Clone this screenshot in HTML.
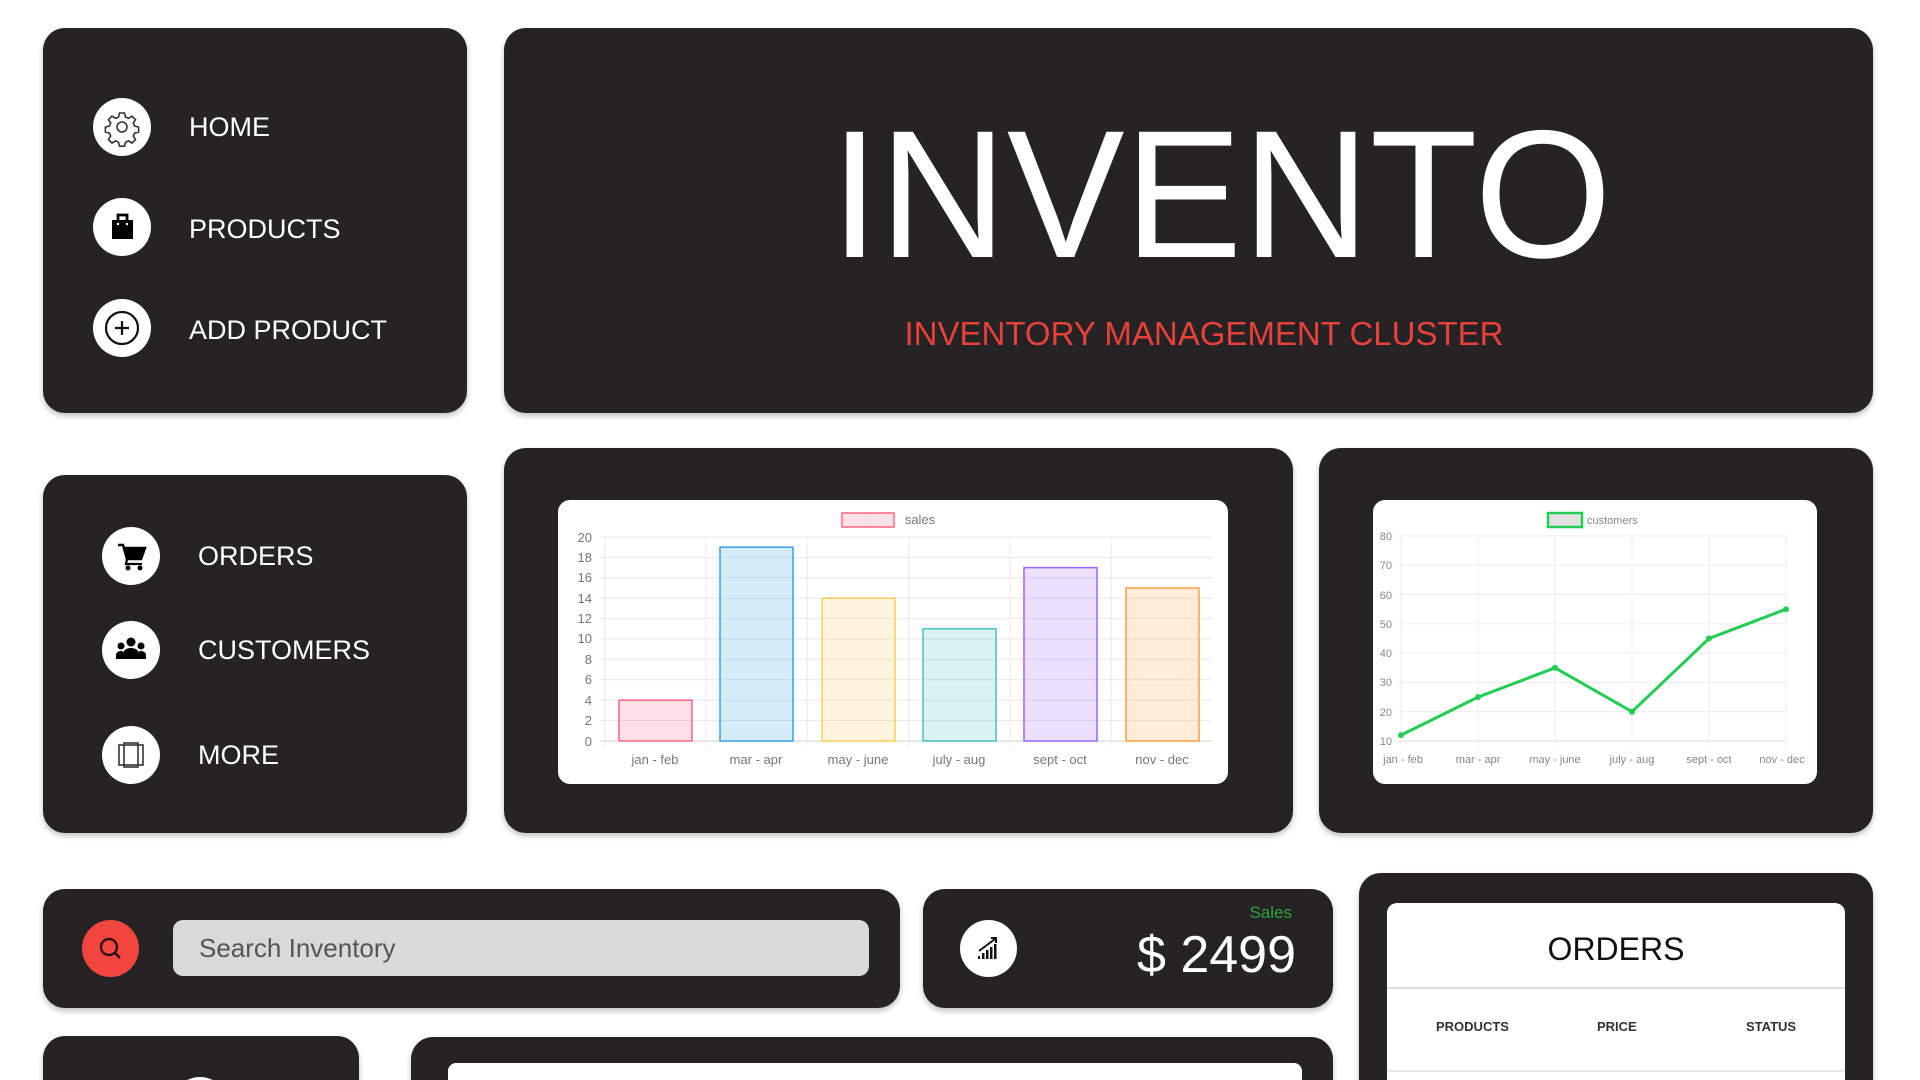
<!DOCTYPE html>
<html><head><meta charset="utf-8"><style>
*{margin:0;padding:0;box-sizing:border-box}
html,body{width:1920px;height:1080px;overflow:hidden}
body{background:#fff;position:relative;font-family:"Liberation Sans",sans-serif}
.c{position:absolute;background:#252324;border-radius:22px;box-shadow:0 3px 6px rgba(0,0,0,.25)}
.a{position:absolute}
.ic{position:absolute;width:58px;height:58px;border-radius:50%;background:#fff}
.nav{position:absolute;color:#fff;font-size:27px;line-height:1}
.w{position:absolute;background:#fff;border-radius:12px}
</style></head><body>

<!-- nav panel 1 -->
<div class="c" style="left:43px;top:28px;width:424px;height:385px"></div>
<div class="ic" style="left:93px;top:98px"><svg width="58" height="58" viewBox="0 0 58 58"><g fill="none" stroke="#333" stroke-width="1.6"><path d="M26.5 15h5l1 4 3 1.3 3.5-2.2 3.5 3.5-2.2 3.5 1.3 3 4 1v5l-4 1-1.3 3 2.2 3.5-3.5 3.5-3.5-2.2-3 1.3-1 4h-5l-1-4-3-1.3-3.5 2.2-3.5-3.5 2.2-3.5-1.3-3-4-1v-5l4-1 1.3-3-2.2-3.5 3.5-3.5 3.5 2.2 3-1.3z"/><circle cx="29" cy="29" r="5"/></g></svg></div>
<div class="nav" style="left:189px;top:114px">HOME</div>
<div class="ic" style="left:93px;top:198px"><svg width="58" height="58" viewBox="0 0 58 58"><path d="M19 22h21v19H19z" fill="#000"/><path d="M25 22v-5h9v5" fill="none" stroke="#000" stroke-width="2.8"/><circle cx="25" cy="26" r="1.2" fill="#fff"/><circle cx="34" cy="26" r="1.2" fill="#fff"/></svg></div>
<div class="nav" style="left:189px;top:216px">PRODUCTS</div>
<div class="ic" style="left:93px;top:299px"><svg width="58" height="58" viewBox="0 0 58 58"><circle cx="29" cy="29" r="16" fill="none" stroke="#111" stroke-width="2.2"/><path d="M29 22v14M22 29h14" stroke="#111" stroke-width="2.2"/></svg></div>
<div class="nav" style="left:189px;top:317px">ADD PRODUCT</div>

<!-- header -->
<div class="c" style="left:504px;top:28px;width:1369px;height:385px"></div>
<div class="a" style="left:504px;width:1434px;top:102px;text-align:center;color:#fff;font-size:182px;line-height:184px;transform:scaleX(.97)">INVENTO</div>
<div class="a" style="left:504px;width:1400px;top:314px;text-align:center;color:#e8403a;font-size:33px;line-height:40px">INVENTORY MANAGEMENT CLUSTER</div>

<!-- nav panel 2 -->
<div class="c" style="left:43px;top:475px;width:424px;height:358px"></div>
<div class="ic" style="left:102px;top:527px"><svg width="58" height="58" viewBox="0 0 58 58"><path d="M16 18h5l4 14h14l4-11H23" fill="none" stroke="#000" stroke-width="2.5"/><path d="M23 21h20l-4 11H25z" fill="#000"/><path d="M25 32l-1 5h16" fill="none" stroke="#000" stroke-width="2.2"/><circle cx="26" cy="41" r="2.5" fill="#000"/><circle cx="38" cy="41" r="2.5" fill="#000"/></svg></div>
<div class="nav" style="left:198px;top:543px">ORDERS</div>
<div class="ic" style="left:102px;top:621px"><svg width="58" height="58" viewBox="0 0 58 58"><circle cx="29" cy="21" r="4.5" fill="#000"/><circle cx="19" cy="25" r="3.5" fill="#000"/><circle cx="39" cy="25" r="3.5" fill="#000"/><path d="M21 38v-5c0-4 4-6 8-6s8 2 8 6v5z" fill="#000"/><path d="M14 38v-4c0-2 2-4 5-4 1 0 2 0 2 1v7zM44 38v-4c0-2-2-4-5-4-1 0-2 0-2 1v7z" fill="#000"/></svg></div>
<div class="nav" style="left:198px;top:637px">CUSTOMERS</div>
<div class="ic" style="left:102px;top:726px"><svg width="58" height="58" viewBox="0 0 58 58"><g fill="none" stroke="#333" stroke-width="1.6"><rect x="17" y="19" width="24" height="20"/><rect x="22" y="17" width="14" height="24"/></g></svg></div>
<div class="nav" style="left:198px;top:742px">MORE</div>

<!-- bar chart -->
<div class="c" style="left:504px;top:448px;width:789px;height:385px"></div>
<div class="w" style="left:558px;top:500px;width:670px;height:284px"></div>
<svg class="a" style="left:0;top:0" width="1920" height="1080">
<g stroke="#e8e8e8" stroke-width="1">
<line x1="600" x2="1212" y1="537" y2="537"/><line x1="600" x2="1212" y1="557.4" y2="557.4"/><line x1="600" x2="1212" y1="577.8" y2="577.8"/><line x1="600" x2="1212" y1="598.2" y2="598.2"/><line x1="600" x2="1212" y1="618.6" y2="618.6"/><line x1="600" x2="1212" y1="639" y2="639"/><line x1="600" x2="1212" y1="659.4" y2="659.4"/><line x1="600" x2="1212" y1="679.8" y2="679.8"/><line x1="600" x2="1212" y1="700.2" y2="700.2"/><line x1="600" x2="1212" y1="720.6" y2="720.6"/><line x1="600" x2="1212" y1="741" y2="741" stroke="#d0d0d0"/>
<line x1="605" x2="605" y1="537" y2="747"/><line x1="706" x2="706" y1="537" y2="747"/><line x1="807" x2="807" y1="537" y2="747"/><line x1="909" x2="909" y1="537" y2="747"/><line x1="1010" x2="1010" y1="537" y2="747"/><line x1="1111" x2="1111" y1="537" y2="747"/>
</g>
<g stroke-width="1.5">
<rect x="619" y="700.2" width="73" height="40.8" fill="rgba(255,99,132,.2)" stroke="rgb(255,99,132)"/>
<rect x="720" y="547.2" width="73" height="193.8" fill="rgba(54,162,235,.2)" stroke="rgb(54,162,235)"/>
<rect x="822" y="598.2" width="73" height="142.8" fill="rgba(255,206,86,.2)" stroke="rgb(255,206,86)"/>
<rect x="923" y="628.8" width="73" height="112.2" fill="rgba(75,192,192,.2)" stroke="rgb(75,192,192)"/>
<rect x="1024" y="567.6" width="73" height="173.4" fill="rgba(153,102,255,.2)" stroke="rgb(153,102,255)"/>
<rect x="1126" y="588" width="73" height="153" fill="rgba(255,159,64,.2)" stroke="rgb(255,159,64)"/>
<rect x="842" y="513" width="52" height="14" fill="rgba(255,99,132,.2)" stroke="rgb(255,99,132)"/>
</g>
<g font-family="Liberation Sans" font-size="13" fill="#777" text-anchor="end">
<text x="592" y="542">20</text><text x="592" y="562">18</text><text x="592" y="582">16</text><text x="592" y="603">14</text><text x="592" y="623">12</text><text x="592" y="643">10</text><text x="592" y="664">8</text><text x="592" y="684">6</text><text x="592" y="705">4</text><text x="592" y="725">2</text><text x="592" y="746">0</text>
</g>
<g font-family="Liberation Sans" font-size="13" fill="#777" text-anchor="middle">
<text x="655" y="764">jan - feb</text><text x="756" y="764">mar - apr</text><text x="858" y="764">may - june</text><text x="959" y="764">july - aug</text><text x="1060" y="764">sept - oct</text><text x="1162" y="764">nov - dec</text>
<text x="920" y="524">sales</text>
</g>
</svg>
<!-- line chart -->
<div class="c" style="left:1319px;top:448px;width:554px;height:385px"></div>
<div class="w" style="left:1373px;top:500px;width:444px;height:284px"></div>
<svg class="a" style="left:0;top:0" width="1920" height="1080">
<g stroke="#ececec" stroke-width="1">
<line x1="1398" x2="1786" y1="536" y2="536"/><line x1="1398" x2="1786" y1="565.3" y2="565.3"/><line x1="1398" x2="1786" y1="594.6" y2="594.6"/><line x1="1398" x2="1786" y1="623.9" y2="623.9"/><line x1="1398" x2="1786" y1="653.1" y2="653.1"/><line x1="1398" x2="1786" y1="682.4" y2="682.4"/><line x1="1398" x2="1786" y1="711.7" y2="711.7"/><line x1="1398" x2="1786" y1="741" y2="741" stroke="#d8d8d8"/>
<line x1="1401" x2="1401" y1="536" y2="746"/><line x1="1478" x2="1478" y1="536" y2="746"/><line x1="1555" x2="1555" y1="536" y2="746"/><line x1="1632" x2="1632" y1="536" y2="746"/><line x1="1709" x2="1709" y1="536" y2="746"/><line x1="1786" x2="1786" y1="536" y2="746"/>
</g>
<polyline points="1401,735.1 1478,697.1 1555,667.8 1632,711.7 1709,638.5 1786,609.2" fill="none" stroke="#22cc55" stroke-width="3"/>
<g fill="#22cc55"><circle cx="1401" cy="735.1" r="3"/><circle cx="1478" cy="697.1" r="3"/><circle cx="1555" cy="667.8" r="3"/><circle cx="1632" cy="711.7" r="3"/><circle cx="1709" cy="638.5" r="3"/><circle cx="1786" cy="609.2" r="3"/></g>
<rect x="1548" y="513" width="34" height="14" fill="#e0e0e0" stroke="#22cc55" stroke-width="2.5"/>
<g font-family="Liberation Sans" font-size="11" fill="#888">
<text x="1587" y="524">customers</text>
<g text-anchor="end"><text x="1392" y="540">80</text><text x="1392" y="569">70</text><text x="1392" y="599">60</text><text x="1392" y="628">50</text><text x="1392" y="657">40</text><text x="1392" y="686">30</text><text x="1392" y="716">20</text><text x="1392" y="745">10</text></g>
<g text-anchor="middle"><text x="1403" y="763">jan - feb</text><text x="1478" y="763">mar - apr</text><text x="1555" y="763">may - june</text><text x="1632" y="763">july - aug</text><text x="1709" y="763">sept - oct</text><text x="1782" y="763">nov - dec</text></g>
</g>
</svg>

<!-- search -->
<div class="c" style="left:43px;top:889px;width:857px;height:119px"></div>
<div class="a" style="left:82px;top:920px;width:57px;height:57px;border-radius:50%;background:#f2453d"><svg width="57" height="57" viewBox="0 0 57 57"><circle cx="27" cy="27" r="8" fill="none" stroke="#2a0e0e" stroke-width="2.3"/><path d="M33 33l5 5" stroke="#2a0e0e" stroke-width="2.3"/></svg></div>
<div class="a" style="left:173px;top:920px;width:696px;height:56px;background:#d9d9d9;border-radius:10px;color:#555;font-size:26px;line-height:56px;padding-left:26px">Search Inventory</div>

<!-- sales -->
<div class="c" style="left:923px;top:889px;width:410px;height:119px"></div>
<div class="a" style="left:960px;top:920px;width:57px;height:57px;border-radius:50%;background:#fff"><svg width="57" height="57" viewBox="0 0 57 57"><g fill="#111"><rect x="18" y="36" width="2" height="3"/><rect x="22" y="33" width="2.5" height="6"/><rect x="26" y="30" width="2.5" height="9"/><rect x="30" y="27" width="2.5" height="12"/><rect x="34" y="24" width="2.5" height="15"/></g><path d="M19 31l16-12" stroke="#111" stroke-width="2"/><path d="M31 18h5v5" fill="none" stroke="#111" stroke-width="2"/></svg></div>
<div class="a" style="right:628px;top:903px;color:#2ea53a;font-size:17px;line-height:20px">Sales</div>
<div class="a" style="right:624px;top:925px;color:#fff;font-size:52px;line-height:60px">$ 2499</div>

<!-- orders -->
<div class="c" style="left:1359px;top:873px;width:514px;height:240px"></div>
<div class="w" style="left:1387px;top:903px;width:458px;height:200px;border-radius:10px"></div>
<div class="a" style="left:1387px;width:458px;top:930px;text-align:center;font-size:32px;line-height:38px;color:#111">ORDERS</div>
<div class="a" style="left:1387px;width:458px;top:987px;height:2px;background:#ddd"></div>
<div class="a" style="left:1387px;width:458px;top:1070px;height:2px;background:#e5e5e5"></div>
<div class="a" style="left:1436px;top:1019px;font-size:13px;font-weight:bold;color:#333">PRODUCTS</div>
<div class="a" style="left:1597px;top:1019px;font-size:13px;font-weight:bold;color:#333">PRICE</div>
<div class="a" style="left:1746px;top:1019px;font-size:13px;font-weight:bold;color:#333">STATUS</div>

<!-- bottom cards -->
<div class="c" style="left:43px;top:1036px;width:316px;height:80px"></div>
<div class="a" style="left:172px;top:1077px;width:56px;height:56px;border-radius:50%;background:#fff"></div>
<div class="c" style="left:411px;top:1037px;width:922px;height:80px"></div>
<div class="w" style="left:448px;top:1063px;width:854px;height:40px;border-radius:8px"></div>
</body></html>
